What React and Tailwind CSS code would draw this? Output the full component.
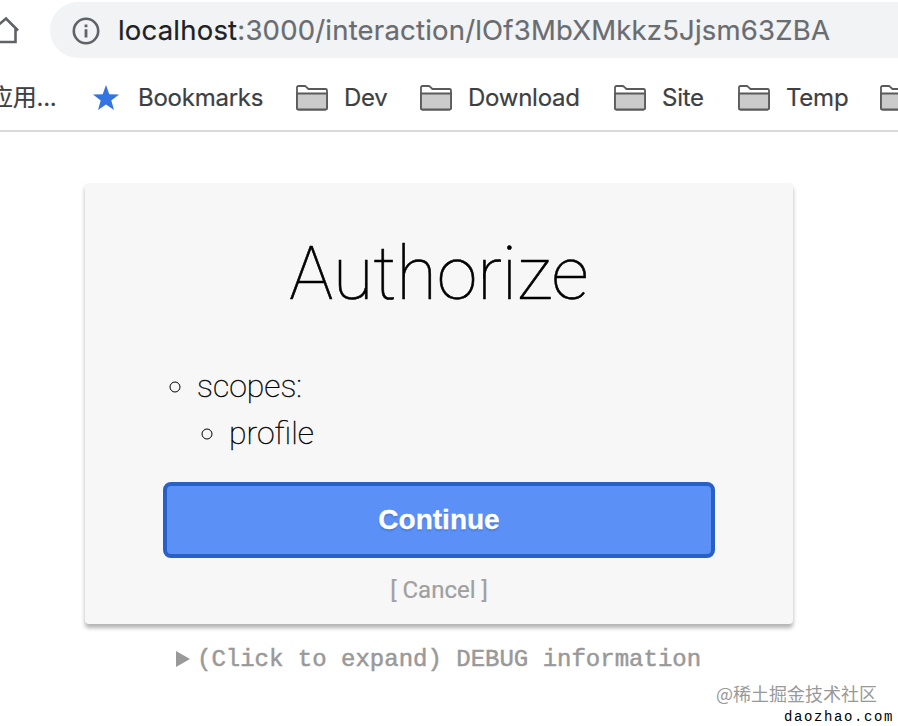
const FolderIcon = () => (
  <svg className="h-[26px] w-8 shrink-0" viewBox="0 0 32 26" fill="none" stroke="#5a5a5a" strokeWidth="1.8" strokeLinejoin="round">
    <path d="M1 23V2.600Q1 1 2.600 1H8.500Q9.500 1 10.200 1.800L12.400 4H29.500Q31 4 31 5.500V23Q31 24.500 29.500 24.500H2.500Q1 24.500 1 23Z" fill="#fff" />
    <path d="M1 8.500H31V23Q31 24.500 29.500 24.500H2.500Q1 24.500 1 23Z" fill="#cbcbcb" />
  </svg>
);

const Folder = ({ name, className }) => (
  <div className={`flex shrink-0 items-center gap-4 ${className}`}>
    <FolderIcon />
    <span>{name}</span>
  </div>
);

const AddressBar = () => (
  <div className="flex h-[58px] pt-[2px]">
    <div className="w-[50px] shrink-0 pt-[13px]">
      <svg className="h-[30px] w-5" viewBox="0 0 20 30" fill="none" stroke="#5f6368" strokeWidth="2.6">
        <path d="M-8 15.500L6 3.500L18 15.500M-5 14V27H15.500V13" />
      </svg>
    </div>
    <div className="flex h-14 grow items-center rounded-l-full bg-[#f1f3f4] pt-px pl-[22px]">
      <svg className="h-7 w-7 shrink-0" viewBox="0 0 28 28" fill="none" stroke="#5f6368">
        <circle cx="14" cy="14" r="12.200" strokeWidth="2.600" />
        <path d="M14 7.500V10.200M14 12.200V20.500" strokeWidth="2.800" />
      </svg>
      <div className="ml-[18px] font-['Inter','Liberation_Sans',sans-serif] text-[27.5px] tracking-[0.2px] whitespace-nowrap text-[#696c70] [-webkit-text-stroke:0.2px]">
        <span className="text-[#202124]">localhost</span>:3000/interaction/lOf3MbXMkkz5Jjsm63ZBA
      </div>
    </div>
  </div>
);

const Bookmarks = () => (
  <div className="flex h-[74px] items-center overflow-hidden border-b-2 border-[#dadada] pt-[8px] font-['Inter','Noto_Sans_CJK_SC',sans-serif] text-[24px] tracking-[-0.25px] text-[#3c4043] [-webkit-text-stroke:0.2px]">
    <span className="-ml-[11px] w-[103px] shrink-0 whitespace-nowrap">应用...</span>
    <svg className="h-[26px] w-7 shrink-0" viewBox="0 0 28 26" fill="#3474e0">
      <path d="M14 0L17.300 9.300L27 9.600L19.300 15.500L22 25L14 19.400L6 25L8.700 15.500L1 9.600L10.700 9.300Z" />
    </svg>
    <span className="ml-[18px] w-[158px] shrink-0">Bookmarks</span>
    <Folder name="Dev" className="w-[124px]" />
    <Folder name="Download" className="w-[194px]" />
    <Folder name="Site" className="w-[124px]" />
    <Folder name="Temp" className="w-[142px]" />
    <FolderIcon />
  </div>
);

const LoginCard = () => (
  <div className="ml-[85px] h-[441px] w-[708px] rounded bg-[#f7f7f7] px-[78px] pt-[47px] shadow-[0_4px_4px_rgba(0,0,0,0.3)]">
    <h1 className="text-center text-[73.6px] leading-[88px] font-thin [-webkit-text-stroke:0.6px]">Authorize</h1>
    <ul className="mt-[45px] list-[circle] pl-[34px] text-[32px] leading-[47px] font-thin [-webkit-text-stroke:0.4px]">
      <li>
        scopes:
        <ul className="list-[circle] pl-8">
          <li>profile</li>
        </ul>
      </li>
    </ul>
    <button className="mt-[25px] block h-[76px] w-full rounded-lg border-4 border-[#2860c6] bg-[#5b90f6] font-['Liberation_Sans',Arial,sans-serif] text-[28px] font-bold text-white [-webkit-text-stroke:0.3px] [text-shadow:0_2px_2px_rgba(0,0,0,0.15)]">
      Continue
    </button>
    <div className="mt-[16px] text-center text-[24px] leading-8 text-[#a0a0a0] [-webkit-text-stroke:0.2px]">
      [ <a>Cancel</a> ]
    </div>
  </div>
);

const App = () => {
  return (
    <div className="h-[726px] w-[898px] overflow-hidden bg-white font-['Roboto',sans-serif] text-black">
      <AddressBar />
      <Bookmarks />
      <div className="pt-[51px]">
        <LoginCard />
      </div>
      <div className="mt-[20px] flex h-[30px] items-center pl-[176px] text-[#999]">
        <svg className="h-4 w-[15px]" viewBox="0 0 15 16" fill="#999">
          <path d="M0 0L14 8L0 16Z" />
        </svg>
        <span className="ml-[6px] pt-[2px] font-['Liberation_Mono',monospace] text-[24px] whitespace-pre [-webkit-text-stroke:0.5px]">(Click to expand) DEBUG information</span>
      </div>
      <div className="mt-[7px] flex flex-col items-end">
        <span className="mr-[21px] font-['Noto_Sans_CJK_SC',sans-serif] text-[18px] leading-[24px] text-[#999]">@稀土掘金技术社区</span>
        <span className="mt-[2px] mr-[4px] font-['Liberation_Mono',monospace] text-[14px] leading-[20px] tracking-[1.6px]">daozhao.com</span>
      </div>
    </div>
  );
};

export default App;
